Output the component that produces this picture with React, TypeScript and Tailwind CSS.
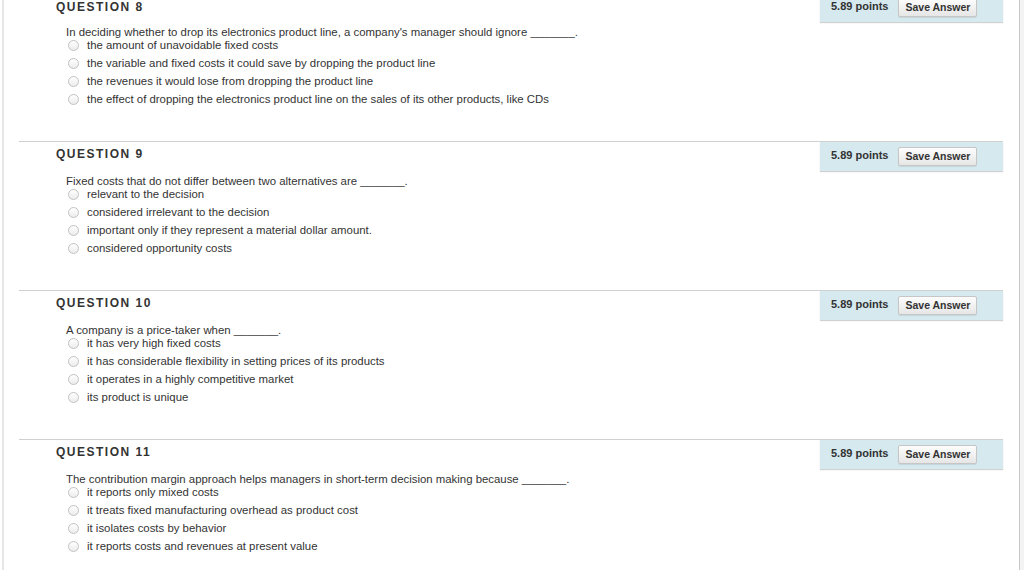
import React from "react";

type Q = { num: number; text: string; options: string[] };

const questions: Q[] = [
  {
    num: 8,
    text: "In deciding whether to drop its electronics product line, a company's manager should ignore _______.",
    options: [
      "the amount of unavoidable fixed costs",
      "the variable and fixed costs it could save by dropping the product line",
      "the revenues it would lose from dropping the product line",
      "the effect of dropping the electronics product line on the sales of its other products, like CDs",
    ],
  },
  {
    num: 9,
    text: "Fixed costs that do not differ between two alternatives are _______.",
    options: [
      "relevant to the decision",
      "considered irrelevant to the decision",
      "important only if they represent a material dollar amount.",
      "considered opportunity costs",
    ],
  },
  {
    num: 10,
    text: "A company is a price-taker when _______.",
    options: [
      "it has very high fixed costs",
      "it has considerable flexibility in setting prices of its products",
      "it operates in a highly competitive market",
      "its product is unique",
    ],
  },
  {
    num: 11,
    text: "The contribution margin approach helps managers in short-term decision making because _______.",
    options: [
      "it reports only mixed costs",
      "it treats fixed manufacturing overhead as product cost",
      "it isolates costs by behavior",
      "it reports costs and revenues at present value",
    ],
  },
];

function Radio() {
  return (
    <span className="ml-[2px] mr-[8px] inline-block h-[11px] w-[11px] shrink-0 rounded-full border border-[#c2c2c2] bg-gradient-to-b from-[#ffffff] to-[#ececec]" />
  );
}

function Section({ q, first }: { q: Q; first: boolean }) {
  return (
    <div className={`border-t border-[#d0d0d0] ${first ? "mt-[-8px]" : ""}`}>
      <div className="flex items-start justify-between">
        <h2
          className={`pl-[37px] text-[12px] font-bold leading-[16px] tracking-[1.5px] text-[#333] ${
            first ? "pt-[6px]" : "pt-[4px]"
          }`}
        >
          QUESTION {q.num}
        </h2>
        <div className="flex h-[29px] w-[183px] items-center bg-[#d5e9ef] pb-[3px] pl-[11px] shadow-[0_1px_1px_rgba(0,0,0,0.18)]">
          <span className="text-[11px] font-bold leading-[13px] text-[#333]">5.89 points</span>
          <button className="ml-[10px] mt-[2px] h-[19px] w-[79px] rounded-[2px] border border-[#c6c6c6] bg-gradient-to-b from-[#fdfdfd] to-[#e6e6e6] text-[10.5px] font-bold leading-[17px] text-[#333] shadow-[0_1px_1px_rgba(0,0,0,0.08)]">
            Save Answer
          </button>
        </div>
      </div>
      <div className="pb-[35px] pl-[47px]">
        <p className="mt-[4px] text-[11.4px] leading-[13px] text-[#333]">{q.text}</p>
        <div className="flex flex-col gap-[5px]">
          {q.options.map((o) => (
            <div key={o} className="flex h-[13px] items-center text-[11.4px] leading-[13px] text-[#333]">
              <Radio />
              <span>{o}</span>
            </div>
          ))}
        </div>
      </div>
    </div>
  );
}

export default function App() {
  return (
    <div
      className="flex h-[570px] w-[1024px] overflow-hidden bg-white"
      style={{ fontFamily: '"Liberation Sans", Arial, Helvetica, sans-serif' }}
    >
      <div className="w-[2px] shrink-0" />
      <div className="w-[2px] shrink-0 bg-[#e6e6e6]" />
      <div className="w-[15px] shrink-0" />
      <div className="w-[984px] shrink-0">
        {questions.map((q, i) => (
          <Section key={q.num} q={q} first={i === 0} />
        ))}
      </div>
      <div className="w-[16px] shrink-0" />
      <div className="w-[1px] shrink-0 bg-[#c8c8c8]" />
      <div className="flex-1 bg-[#f3f3f3]" />
    </div>
  );
}
